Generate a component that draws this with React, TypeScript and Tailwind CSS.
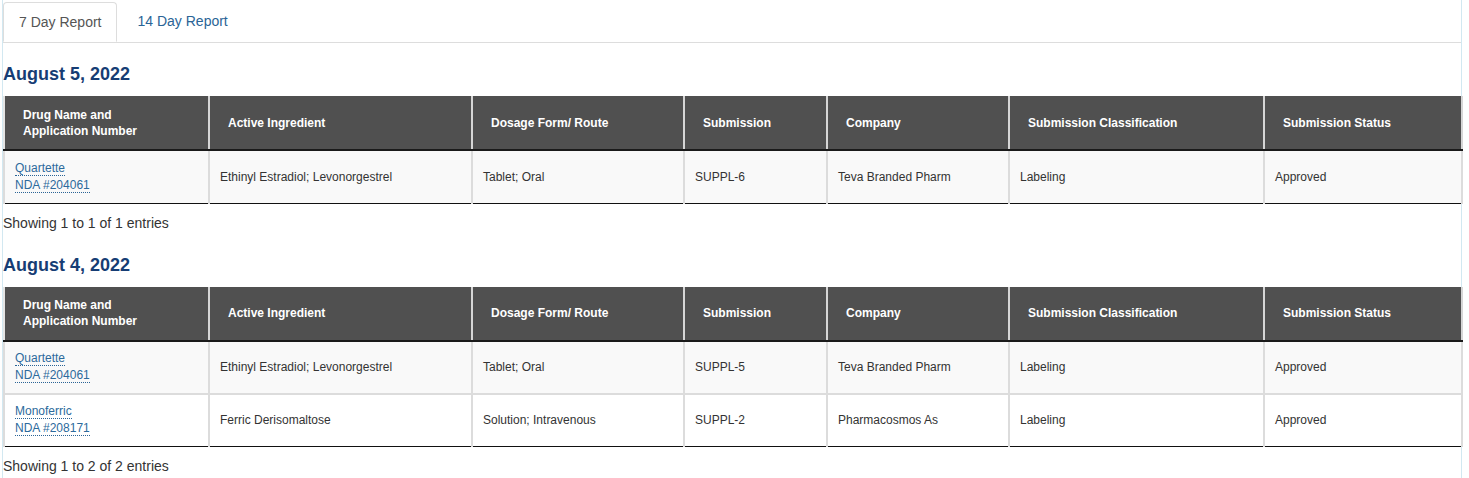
const cols = [
  { title: "Drug Name and Application Number", w: "w-[205px]" },
  { title: "Active Ingredient", w: "w-[263px]" },
  { title: "Dosage Form/ Route", w: "w-[212px]" },
  { title: "Submission", w: "w-[143px]" },
  { title: "Company", w: "w-[182px]" },
  { title: "Submission Classification", w: "w-[255px]" },
  { title: "Submission Status", w: "w-[198px]" },
];

type Row = {
  drug: string;
  nda: string;
  ingredient: string;
  form: string;
  submission: string;
  company: string;
  classification: string;
  status: string;
};

const reports: { date: string; rows: Row[] }[] = [
  {
    date: "August 5, 2022",
    rows: [
      {
        drug: "Quartette",
        nda: "NDA #204061",
        ingredient: "Ethinyl Estradiol; Levonorgestrel",
        form: "Tablet; Oral",
        submission: "SUPPL-6",
        company: "Teva Branded Pharm",
        classification: "Labeling",
        status: "Approved",
      },
    ],
  },
  {
    date: "August 4, 2022",
    rows: [
      {
        drug: "Quartette",
        nda: "NDA #204061",
        ingredient: "Ethinyl Estradiol; Levonorgestrel",
        form: "Tablet; Oral",
        submission: "SUPPL-5",
        company: "Teva Branded Pharm",
        classification: "Labeling",
        status: "Approved",
      },
      {
        drug: "Monoferric",
        nda: "NDA #208171",
        ingredient: "Ferric Derisomaltose",
        form: "Solution; Intravenous",
        submission: "SUPPL-2",
        company: "Pharmacosmos As",
        classification: "Labeling",
        status: "Approved",
      },
    ],
  },
];

function ReportTable({ rows }: { rows: Row[] }) {
  return (
    <table className="w-[1458px] table-fixed border-collapse text-[12px]">
      <thead>
        <tr className="h-[54px] bg-[#505050] text-white">
          {cols.map((c, i) => (
            <th
              key={c.title}
              className={`${c.w} border-x-2 border-b-2 border-x-[#d6d6d6] border-b-[#1a1a1a] pl-[18px] pr-3 text-left align-middle font-bold leading-[16px] ${
                i === 0 ? "border-l-[#e4e4e4]" : ""
              }`}
            >
              {i === 0 ? (
                <>
                  Drug Name and
                  <br />
                  Application Number
                </>
              ) : (
                c.title
              )}
            </th>
          ))}
        </tr>
      </thead>
      <tbody className="text-[#333]">
        {rows.map((r, i) => (
          <tr
            key={r.nda + r.submission}
            className={`h-[53px] ${i % 2 === 0 ? "bg-[#f9f9f9]" : "bg-white"} ${
              i === rows.length - 1 ? "border-b border-b-[#111]" : ""
            }`}
          >
            <td className="border-x-2 border-t-2 border-[#dcdcdc] pl-[10px] align-middle leading-[17px]">
              <div className="flex flex-col items-start">
                <a className="border-b border-dotted border-[#2a6496] leading-[14px] text-[#2c6a9c]">
                  {r.drug}
                </a>
                <a className="mt-[2px] border-b border-dotted border-[#2a6496] leading-[14px] text-[#2c6a9c]">
                  {r.nda}
                </a>
              </div>
            </td>
            {[r.ingredient, r.form, r.submission, r.company, r.classification, r.status].map((v, j) => (
              <td key={j} className="border-x-2 border-t-2 border-[#dcdcdc] pl-[10px] align-middle">
                {v}
              </td>
            ))}
          </tr>
        ))}
      </tbody>
    </table>
  );
}

export default function App() {
  return (
    <div className="bg-white pl-[2px] font-['Liberation_Sans',Arial,sans-serif]">
      <div className="w-[1460px] border-x border-[#d2e8f1] pb-[4px]">
        <div className="flex border-b border-[#dddddd] pt-[2px] text-[14px]">
          <div className="-mb-px h-[40px] rounded-t border border-[#dddddd] border-b-white bg-white px-[15px] leading-[39px] text-[#555]">
            7 Day Report
          </div>
          <div className="h-[40px] px-[20px] leading-[39px] text-[#2a6496]">14 Day Report</div>
        </div>
        {reports.map((rep, k) => (
          <div key={rep.date}>
            <h2
              className={`${k === 0 ? "mt-[21px]" : "mt-[22px]"} mb-[12px] text-[18px] font-bold leading-[20px] text-[#163d74]`}
            >
              {rep.date}
            </h2>
            <ReportTable rows={rep.rows} />
            <div className="mt-[9px] text-[14px] leading-[20px] text-[#333]">
              Showing 1 to {rep.rows.length} of {rep.rows.length} entries
            </div>
          </div>
        ))}
      </div>
    </div>
  );
}
